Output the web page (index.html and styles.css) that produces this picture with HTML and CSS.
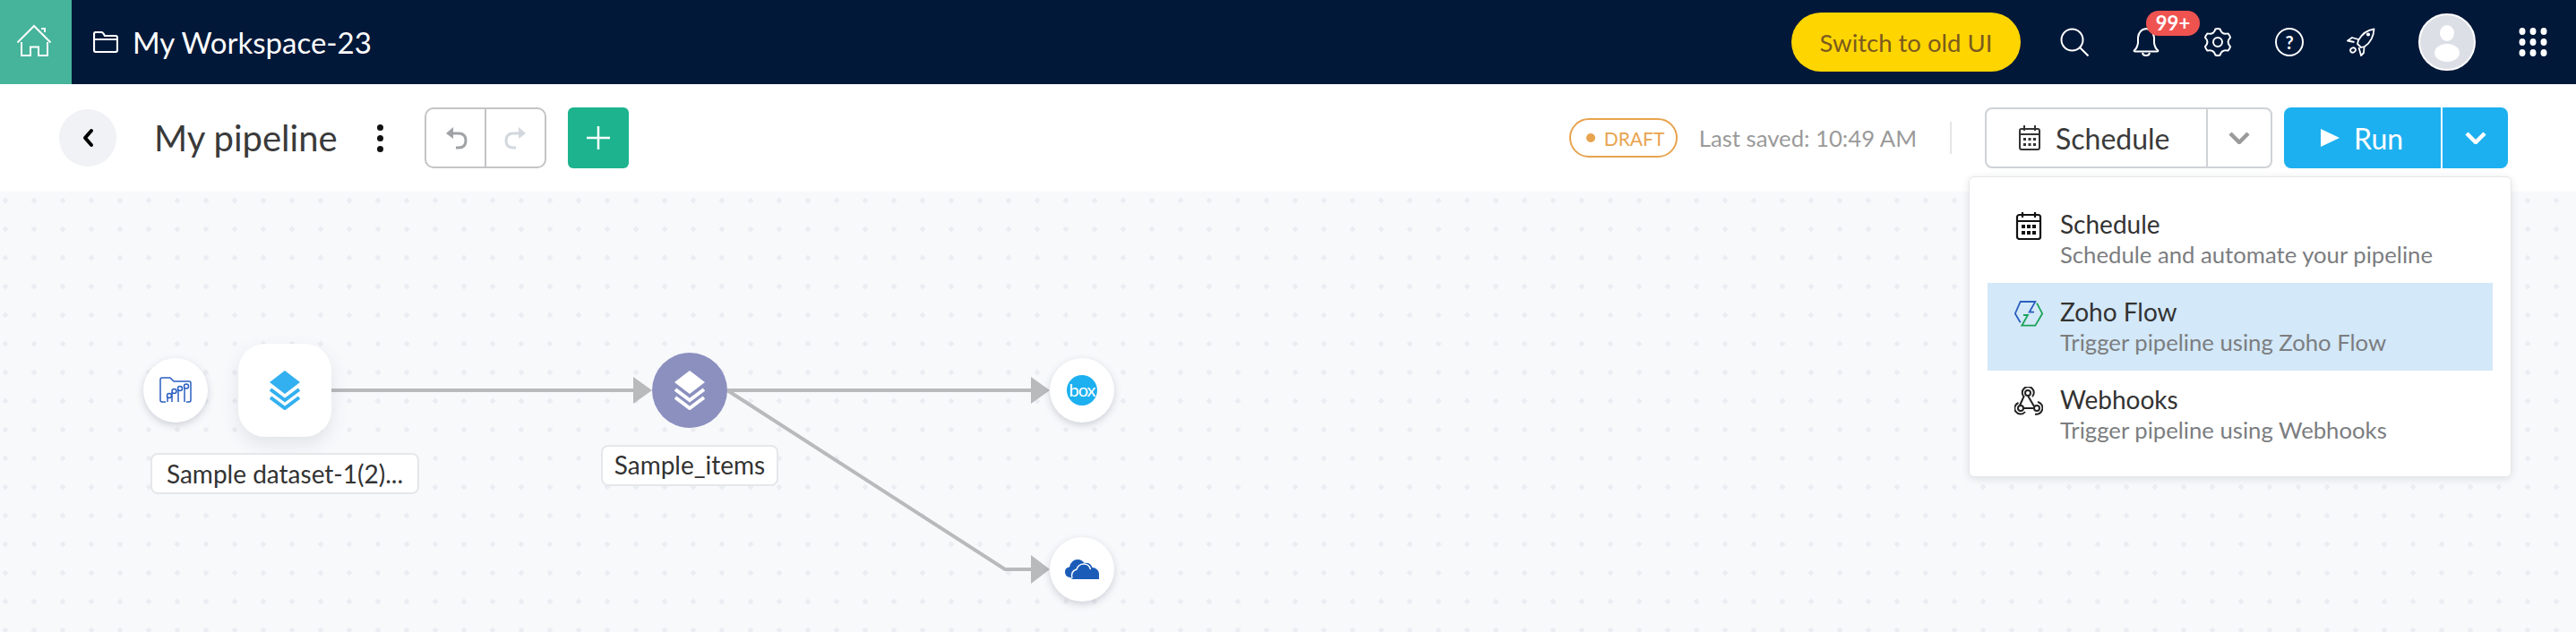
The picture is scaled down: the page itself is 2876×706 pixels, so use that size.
FILE: index.html
```html
<!DOCTYPE html>
<html lang="en">
<head>
<meta charset="utf-8">
<title>My pipeline</title>
<link rel="stylesheet" href="styles.css">
</head>
<body>
<header class="topbar">
  <a class="home">
    <svg width="80" height="94" viewBox="0 0 80 94" fill="none" stroke="#fff" stroke-width="2"><path d="M19.5 47.5 38 29 56.5 47.5M24 47v15h10V52.500h9V62h10V47M46 32h4v4"/></svg>
  </a>
  <div class="workspace">
    <svg width="28" height="24" viewBox="0 0 28 24" fill="none" stroke="#fff" stroke-width="2.200"><path d="M1 21V3q0-2 2-2h6q1.500 0 2.500 1.500L13 5h12q2 0 2 2v14q0 2-2 2H3q-2 0-2-2ZM1 9h26"/></svg>
    <span>My Workspace-23</span>
  </div>
  <div class="top-actions">
    <button class="old-ui">Switch to old UI</button>
    <div class="top-icons">
      <svg class="ticon" viewBox="0 0 32 32" fill="none" stroke="#fff" stroke-width="2"><circle cx="13.500" cy="13.500" r="12"/><path d="m22 22 9.500 9.500"/></svg>
      <div class="bell">
        <svg class="ticon" viewBox="0 0 32 32" fill="none" stroke="#fff" stroke-width="2"><path d="M3 25q3-2 4-8V11q1-9 9-10 8 1 9 10v6q1 6 4 8 1 1.500-1 1.500H4q-2 0-1-1.500ZM12 28q.5 3 4 3t4-3"/></svg>
        <span class="badge">99+</span>
      </div>
      <svg class="ticon" viewBox="0 0 32 32" fill="none" stroke="#fff" stroke-width="2" stroke-linejoin="round"><path d="M13.400 1.500Q16 .5 18.600 1.500Q20.500 8.200 27.500 6.400Q29.500 8.500 30.100 10.900Q25 16 30.100 21.100Q29.500 23.500 27.500 25.600Q20.500 23.800 18.600 30.500Q16 31.500 13.400 30.500Q11.500 23.800 4.500 25.600Q2.500 23.500 1.900 21.100Q7 16 1.900 10.900Q2.500 8.500 4.500 6.400Q11.500 8.200 13.400 1.500Z"/><circle cx="16" cy="16" r="5"/></svg>
      <div class="help">?</div>
      <svg class="ticon" viewBox="0 0 32 32" fill="none" stroke="#fff" stroke-width="1.800" stroke-linejoin="round"><path d="M30.500 1.500C23 2.500 17 7 13 14l-1 4 4 4 4-1c6-4 10-11 10.500-19.500ZM13 13 6 11 1 14.500 8.500 16M19.500 21.500 19 28l-3 3-2.500-9"/><ellipse cx="7" cy="25" rx="3" ry="2.500" transform="rotate(-30 7 25)"/><circle cx="24" cy="7.500" r="1.200" fill="#fff"/></svg>
    </div>
    <div class="avatar">
      <svg width="64" height="64" viewBox="0 0 64 64"><circle cx="32" cy="32" r="31" fill="#dcdfe6" stroke="#fff" stroke-width="2"/><ellipse cx="32" cy="22" rx="8" ry="9" fill="#fff"/><ellipse cx="32" cy="44" rx="14" ry="10" fill="#fff"/></svg>
    </div>
    <svg class="apps" width="32" height="32" viewBox="0 0 32 32" fill="#fff"><ellipse cx="4" cy="4" rx="3.500" ry="4"/><ellipse cx="16" cy="4" rx="3.500" ry="4"/><ellipse cx="28" cy="4" rx="3.500" ry="4"/><ellipse cx="4" cy="16" rx="3.500" ry="4"/><ellipse cx="16" cy="16" rx="3.500" ry="4"/><ellipse cx="28" cy="16" rx="3.500" ry="4"/><ellipse cx="4" cy="28" rx="3.500" ry="4"/><ellipse cx="16" cy="28" rx="3.500" ry="4"/><ellipse cx="28" cy="28" rx="3.500" ry="4"/></svg>
  </div>
</header>

<section class="toolbar">
  <button class="back">
    <svg width="14" height="22" viewBox="0 0 14 22" fill="none" stroke="#000" stroke-width="4" stroke-linecap="round" stroke-linejoin="round"><path d="M11 3 4 11l7 8"/></svg>
  </button>
  <h1 class="title">My pipeline</h1>
  <div class="kebab"><i></i><i></i><i></i></div>
  <div class="history">
    <div class="hist-btn">
      <svg width="26" height="26" viewBox="0 0 26 26" fill="none" stroke="#a0a2a5" stroke-width="3"><path d="M10 8h6q8 0 8 8t-8 8h-3"/><path d="M10 1 2 8l8 6z" fill="#a0a2a5" stroke="none"/></svg>
    </div>
    <div class="hist-btn">
      <svg width="26" height="26" viewBox="0 0 26 26" fill="none" stroke="#d2d8de" stroke-width="3"><path d="M16 8h-6q-8 0-8 8t8 8h3"/><path d="m16 1 8 7-8 6z" fill="#d2d8de" stroke="none"/></svg>
    </div>
  </div>
  <button class="add">
    <svg width="28" height="28" viewBox="0 0 28 28" stroke="#fff" stroke-width="2.500"><path d="M14 1v26M1 14h26"/></svg>
  </button>

  <div class="tool-right">
    <span class="draft"><i></i>DRAFT</span>
    <span class="saved">Last saved: 10:49 AM</span>
    <span class="vline"></span>
    <div class="schedule">
      <button class="sched-main">
        <svg width="24" height="28" viewBox="0 0 24 28" fill="none" stroke="#333" stroke-width="2"><rect x="1" y="4" width="22" height="23" rx="2"/><path d="M1 10h22M6 0v6M18 0v6"/><path d="M5 14h3v3H5zM10.500 14h3v3h-3zM16 14h3v3h-3zM5 20h3v3H5zM10.500 20h3v3h-3zM16 20h3v3h-3z" fill="#333" stroke="none"/></svg>
        <span>Schedule</span>
      </button>
      <button class="sched-caret">
        <svg width="24" height="14" viewBox="0 0 24 14" fill="none" stroke="#9a9a9a" stroke-width="4.500"><path d="m2 2 10 10L22 2"/></svg>
      </button>
      <div class="menu">
        <div class="menu-row">
          <svg class="micon" viewBox="0 0 32 32" fill="none" stroke="#111" stroke-width="2.200"><rect x="3" y="4" width="26" height="27" rx="2.500"/><path d="M3 11h26M9 1v6M23 1v6"/><path d="M8 15h4v4H8zM14 15h4v4h-4zM20 15h4v4h-4zM8 22h4v4H8zM14 22h4v4h-4zM20 22h4v4h-4z" fill="#111" stroke="none"/></svg>
          <div><div class="m-title">Schedule</div><div class="m-sub">Schedule and automate your pipeline</div></div>
        </div>
        <div class="menu-row active">
          <svg class="micon" viewBox="0 0 32 32" fill="none" stroke-width="1.800"><path d="M6.700 26.300 .8 16.300 6.700 3H23.300L16.700 14.700H22" stroke="#2b5fc0"/><path d="M25 4.700 31.200 16.300 23.300 29.700H8.300L15 18H10" stroke="#1aa35a"/></svg>
          <div><div class="m-title">Zoho Flow</div><div class="m-sub">Trigger pipeline using Zoho Flow</div></div>
        </div>
        <div class="menu-row">
          <svg class="micon" viewBox="0 0 32 32" fill="none" stroke="#222" stroke-width="2"><circle cx="15" cy="7" r="3"/><circle cx="7" cy="24" r="3"/><circle cx="25" cy="24" r="3"/><path d="M20 11a6.500 6.500 0 1 0-9.500 0L6 21M12 28a6.500 6.500 0 1 1-7.500-10M10 24h12M26 17a6.500 6.500 0 1 1-3 13.500M15 10l7 12"/></svg>
          <div><div class="m-title">Webhooks</div><div class="m-sub">Trigger pipeline using Webhooks</div></div>
        </div>
      </div>
    </div>
    <div class="run">
      <button class="run-main">
        <svg width="21" height="20" viewBox="0 0 21 20"><path d="M0 0 21 10 0 20z" fill="#fff"/></svg>
        <span>Run</span>
      </button>
      <button class="run-caret">
        <svg width="24" height="14" viewBox="0 0 24 14" fill="none" stroke="#fff" stroke-width="4.500"><path d="m2 2 10 10L22 2"/></svg>
      </button>
    </div>
  </div>
</section>

<main class="canvas">
  <svg class="board" width="2876" height="492" viewBox="0 214 2876 492">
    <defs>
      <pattern id="dots" x="-10" y="-16" width="32" height="32" patternUnits="userSpaceOnUse">
        <path d="M16 12.500 19.500 16 16 19.500 12.500 16z" fill="#ebedf2"/>
      </pattern>
    </defs>
    <rect x="0" y="214" width="2876" height="492" fill="url(#dots)"/>
    <g fill="none" stroke="#b9babc" stroke-width="4">
      <path d="M370 436H710M812 436H1155M812 436 1122 636H1155"/>
    </g>
    <g fill="#b9babc">
      <path d="M707 421 728 436 707 451z"/>
      <path d="M1151 421 1172 436 1151 451z"/>
      <path d="M1151 620 1172 636 1151 652z"/>
    </g>
  </svg>

  <div class="node round n-folder">
    <svg width="36" height="30" viewBox="0 0 36 30" fill="none" stroke="#2b5fc0" stroke-width="1.500"><path d="M7 28H3q-2 0-2-2V3q0-2 2-2h9l4 4h17q2 0 2 2v19q0 2-2 2h-3"/><path d="M9 28v-6M14 28V17M21 28V14M28 28V12"/><circle cx="11" cy="21" r="2.500"/><circle cx="16.500" cy="16" r="2.500"/><circle cx="23" cy="13" r="2.500"/><circle cx="30" cy="10.500" r="2.500"/></svg>
  </div>
  <div class="node square n-data">
    <svg width="34" height="44" viewBox="0 0 34 44"><path d="M17 0 34 13 17 26 0 13z" fill="#33b0f0"/><path d="M1 21 17 33 33 21M1 30 17 42 33 30" fill="none" stroke="#33b0f0" stroke-width="4"/></svg>
  </div>
  <div class="label l-data">Sample dataset-1(2)...</div>

  <div class="node n-items">
    <svg width="34" height="44" viewBox="0 0 34 44"><path d="M17 0 34 13 17 26 0 13z" fill="#fff"/><path d="M1 21 17 33 33 21M1 30 17 42 33 30" fill="none" stroke="#fff" stroke-width="4"/></svg>
  </div>
  <div class="label l-items">Sample_items</div>

  <div class="node round n-box"><span class="box-logo">box</span></div>
  <div class="node round n-drive">
    <svg width="38" height="24" viewBox="0 0 38 24"><path d="M6 21q-6-.500-6-6 0-5 5-5.500Q7 1 14 1q5 0 7.500 4 7-1 9 5 6.500.500 7.500 6.500V23H8z" fill="#1b5cb8"/><path d="M8 22q-2-8 5-10 2-6 8-6 6 0 7.500 6" fill="none" stroke="#fff" stroke-width="1.500"/></svg>
  </div>
</main>
</body>
</html>
```
FILE: styles.css
```css
* { box-sizing: border-box; }
html, body { margin: 0; padding: 0; }
body {
  width: 2876px;
  height: 706px;
  overflow: hidden;
  font-family: Lato, "Liberation Sans", sans-serif;
  background: #fff;
  color: #333;
}
button { font: inherit; border: 0; padding: 0; background: none; }
svg { display: block; }

/* top bar */
.topbar { display: flex; align-items: center; height: 94px; background: #011839; color: #fff; padding-right: 32px; }
.home { display: flex; width: 80px; height: 94px; background: #46b39b; }
.workspace { display: flex; align-items: center; gap: 16px; margin-left: 24px; font-size: 33px; }
.top-actions { display: flex; align-items: center; margin-left: auto; }
.old-ui { width: 256px; height: 66px; border-radius: 33px; background: #ffd500; color: #7a5a1e; font-size: 27.500px; }
.top-icons { display: flex; align-items: center; gap: 48px; margin: 0 48px 0 44px; }
.ticon { width: 32px; height: 32px; }
.bell { position: relative; width: 32px; height: 32px; }
.badge {
  position: absolute; left: 16px; top: -19px;
  width: 60px; height: 28px; border-radius: 14px;
  background: #ef5350; color: #fff; font-size: 22px; font-weight: 700; line-height: 28px; text-align: center;
}
.help { width: 32px; height: 32px; border: 2px solid #fff; border-radius: 50%; font-size: 20px; font-weight: 700; line-height: 28px; text-align: center; color: #fff; }
.avatar { width: 64px; height: 64px; margin-right: 48px; }

/* tool bar */
.toolbar { display: flex; align-items: center; height: 120px; padding: 0 76px 0 66px; background: #fff; }
.back { display: flex; align-items: center; justify-content: center; width: 64px; height: 64px; border-radius: 50%; background: #f1f2f5; }
.title { margin: 0 0 0 42px; width: 206px; font-size: 40px; font-weight: 400; color: #3a3a3a; white-space: nowrap; }
.kebab { display: flex; flex-direction: column; gap: 5px; margin-left: 43px; }
.kebab i { display: block; width: 7px; height: 7px; border-radius: 50%; background: #111; }
.history { display: flex; width: 136px; height: 68px; margin-left: 46px; border: 2px solid #c3c4c6; border-radius: 10px; }
.hist-btn { display: flex; flex: 1; align-items: center; justify-content: center; }
.hist-btn + .hist-btn { border-left: 2px solid #c3c4c6; }
.add { display: flex; align-items: center; justify-content: center; width: 68px; height: 68px; margin-left: 24px; border-radius: 6px; background: #1cb38e; }
.tool-right { display: flex; align-items: center; margin-left: auto; }
.draft {
  display: flex; align-items: center; gap: 10px;
  width: 121px; height: 44px; padding-left: 17px;
  border: 2px solid #e8a34e; border-radius: 22px;
  color: #e8a34e; font-size: 21px;
}
.draft i { display: block; width: 10px; height: 10px; border-radius: 50%; background: #e8a34e; }
.saved { margin-left: 24px; color: #9a9a9a; font-size: 25.700px; white-space: nowrap; }
.vline { width: 2px; height: 36px; margin: 0 37px; background: #e4e5e7; }
.schedule { position: relative; display: flex; width: 321px; height: 68px; border: 2px solid #cfd2d6; border-radius: 8px; background: #fff; }
.sched-main { display: flex; align-items: center; gap: 17px; width: 245px; padding-left: 36px; font-size: 32px; color: #3a3a3a; }
.sched-caret { display: flex; flex: 1; align-items: center; justify-content: center; border-left: 2px solid #cfd2d6; }
.run { display: flex; width: 250px; height: 68px; margin-left: 13px; border-radius: 8px; background: #1db0f0; color: #fff; }
.run-main { display: flex; align-items: center; gap: 16px; width: 175px; padding-left: 41px; font-size: 32px; color: #fff; }
.run-caret { display: flex; flex: 1; align-items: center; justify-content: center; border-left: 2px solid #fff; }

/* dropdown */
.menu {
  position: absolute; left: -20px; top: 75px; z-index: 5;
  width: 606px; height: 336px; padding: 20px;
  background: #fff; border: 1px solid #e6e7ea; border-radius: 6px;
  box-shadow: 0 2px 10px rgba(30, 40, 60, .12);
}
.menu-row { display: flex; gap: 19px; height: 98px; padding: 15px 0 0 30px; }
.menu-row.active { background: #d3e8f8; }
.micon { flex: none; width: 32px; height: 32px; margin-top: 3px; }
.m-title { font-size: 28px; line-height: 34px; color: #333; }
.m-sub { font-size: 25.700px; line-height: 35px; color: #7b7d80; white-space: nowrap; }

/* canvas */
.canvas { position: relative; height: 492px; background: #f8f9fb; }
.board { position: absolute; left: 0; top: 0; }
.node { position: absolute; display: flex; align-items: center; justify-content: center; background: #fff; }
.round { width: 72px; height: 72px; border-radius: 50%; box-shadow: 0 3px 8px rgba(60, 70, 100, .22); }
.square { width: 104px; height: 104px; border-radius: 30px; box-shadow: 0 8px 20px rgba(60, 70, 100, .12); }
.n-folder { left: 160px; top: 186px; }
.n-data { left: 266px; top: 170px; }
.n-items { left: 728px; top: 180px; width: 84px; height: 84px; border-radius: 50%; background: #8b90bf; }
.n-box { left: 1172px; top: 186px; }
.n-drive { left: 1172px; top: 386px; }
.box-logo {
  display: block; width: 34px; height: 34px; border-radius: 50%;
  background: #1db0f0; color: #fff; font-size: 20px; line-height: 32px; text-align: center; letter-spacing: -1px;
}
.label {
  position: absolute; height: 46px; border: 2px solid #e6e7ea; border-radius: 8px;
  background: #fff; color: #333; font-size: 28px; line-height: 42px; text-align: center; white-space: nowrap;
}
.l-data { left: 168px; top: 292px; width: 300px; }
.l-items { left: 671px; top: 283px; width: 198px; line-height: 40px; }
```
